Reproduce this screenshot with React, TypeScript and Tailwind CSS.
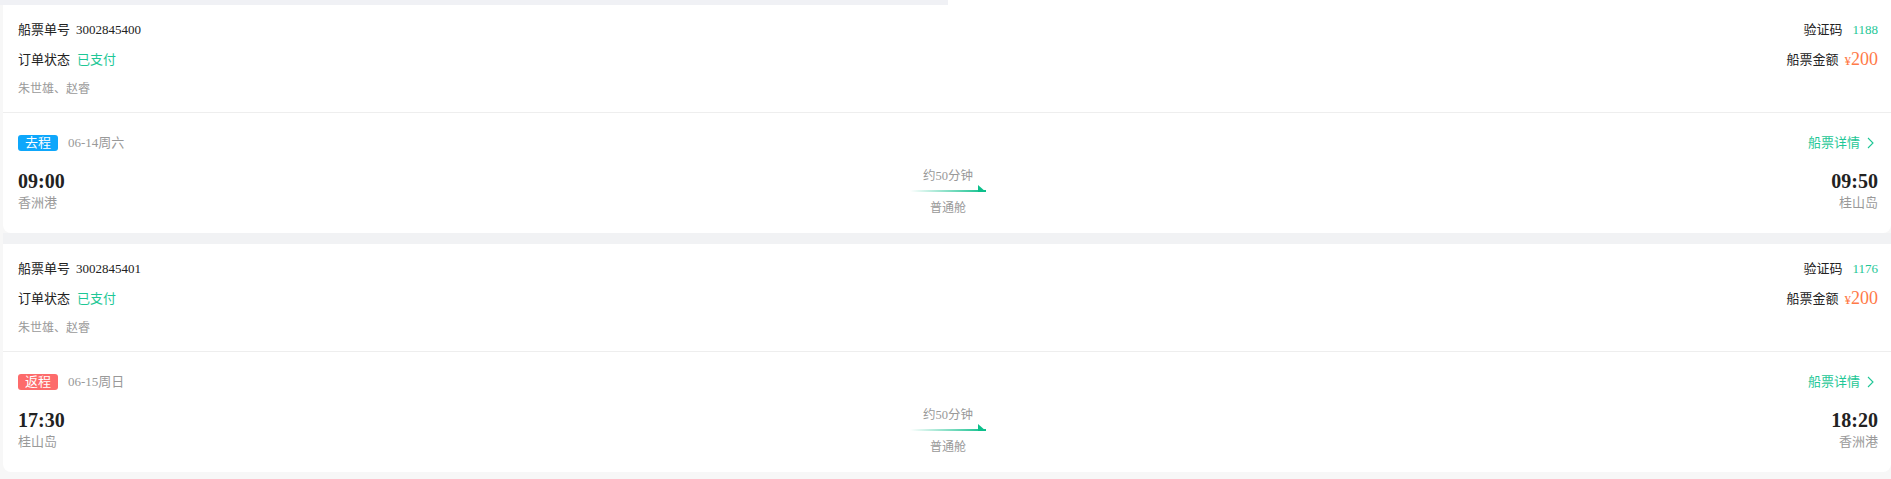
const font = "font-['Liberation_Serif','Noto_Sans_CJK_SC',serif]";

type Ticket = {
  no: string;
  code: string;
  price: string;
  names: string;
  tag: string;
  tagColor: string;
  date: string;
  depart: string;
  from: string;
  arrive: string;
  to: string;
};

const tickets: Ticket[] = [
  {
    no: "3002845400",
    code: "1188",
    price: "200",
    names: "朱世雄、赵睿",
    tag: "去程",
    tagColor: "bg-[#0ea7fb]",
    date: "06-14周六",
    depart: "09:00",
    from: "香洲港",
    arrive: "09:50",
    to: "桂山岛",
  },
  {
    no: "3002845401",
    code: "1176",
    price: "200",
    names: "朱世雄、赵睿",
    tag: "返程",
    tagColor: "bg-[#fd6b6b]",
    date: "06-15周日",
    depart: "17:30",
    from: "桂山岛",
    arrive: "18:20",
    to: "香洲港",
  },
];

const Arrow = () => (
  <svg width="76" height="8" viewBox="0 0 76 8">
    <defs>
      <linearGradient id="ln" x1="0" x2="1" y1="0" y2="0">
        <stop offset="0" stopColor="#0cbf8b" stopOpacity="0" />
        <stop offset="1" stopColor="#0cbf8b" />
      </linearGradient>
    </defs>
    <rect x="0" y="6" width="76" height="2" fill="url(#ln)" />
    <polygon points="68,1 76,8 68,8" fill="#0cbf8b" />
  </svg>
);

const Card = ({ t }: { t: Ticket }) => (
  <div className="bg-white rounded-b-lg">
    <div className="flex justify-between pl-[15px] pr-[13px] pt-[15px] pb-[14px] border-b border-[#eeeeee]">
      <div className="flex flex-col gap-[10px]">
        <div className="h-5 flex items-center gap-[6px] text-[13px] text-[#222]">
          <span>船票单号</span>
          <span>{t.no}</span>
        </div>
        <div className="h-5 flex items-center gap-[7px] text-[13px]">
          <span className="text-[#222]">订单状态</span>
          <span className="text-[#1ec796]">已支付</span>
        </div>
        <div className="h-[18px] flex items-center text-[12px] text-[#9a9a9a]">{t.names}</div>
      </div>
      <div className="flex flex-col items-end gap-[10px]">
        <div className="h-5 flex items-center gap-[10px] text-[13px]">
          <span className="text-[#222]">验证码</span>
          <span className="text-[13px] text-[#1ec796]">{t.code}</span>
        </div>
        <div className="h-5 flex items-center gap-[6px]">
          <span className="text-[13px] text-[#222]">船票金额</span>
          <span className="text-[#ff7a48] flex items-baseline">
            <span className="text-[13px]">¥</span>
            <span className="text-[18px] leading-5">{t.price}</span>
          </span>
        </div>
      </div>
    </div>
    <div className="pl-[15px] pr-[13px] pt-5 pb-[21px]">
      <div className="h-5 flex items-center justify-between">
        <div className="flex items-center gap-[10px]">
          <span className={`${t.tagColor} text-white text-[13px] leading-4 h-4 w-10 rounded-[3px] flex items-center justify-center`}>
            {t.tag}
          </span>
          <span className="text-[13px] text-[#999]">{t.date}</span>
        </div>
        <div className="mr-[4px] flex items-center gap-[7px] text-[13px] text-[#1ec796]">
          <span>船票详情</span>
          <svg width="7" height="12" viewBox="0 0 7 12" fill="none">
            <polyline points="1,1 6,6 1,11" stroke="#1ec796" strokeWidth="1.1" />
          </svg>
        </div>
      </div>
      <div className="mt-[17px] flex items-start justify-between">
        <div className="flex flex-col w-40">
          <span className="text-[20px] leading-[22px] font-bold text-[#222]">{t.depart}</span>
          <span className="mt-[2px] text-[13px] leading-[18px] text-[#999]">{t.from}</span>
        </div>
        <div className="-mt-[2px] -mb-[4px] flex flex-col items-center text-[12px] text-[#999] leading-4">
          <span className="text-[12.5px]">约50分钟</span>
          <Arrow />
          <span className="mt-[8px]">普通舱</span>
        </div>
        <div className="flex flex-col items-end w-40">
          <span className="text-[20px] leading-[22px] font-bold text-[#222]">{t.arrive}</span>
          <span className="mt-[2px] text-[13px] leading-[18px] text-[#999]">{t.to}</span>
        </div>
      </div>
    </div>
  </div>
);

export default function App() {
  return (
    <div className={`${font} w-full min-h-screen bg-[#f7f7f7]`}>
      <div className="flex h-[5px]">
        <div className="w-[948px] bg-[#f0f1f5]" />
        <div className="flex-1 bg-white" />
      </div>
      <div className="pl-[3px] pb-[10px]">
        <Card t={tickets[0]} />
        <div className="h-[11px] bg-[#f1f2f4]" />
        <Card t={tickets[1]} />
      </div>
    </div>
  );
}
